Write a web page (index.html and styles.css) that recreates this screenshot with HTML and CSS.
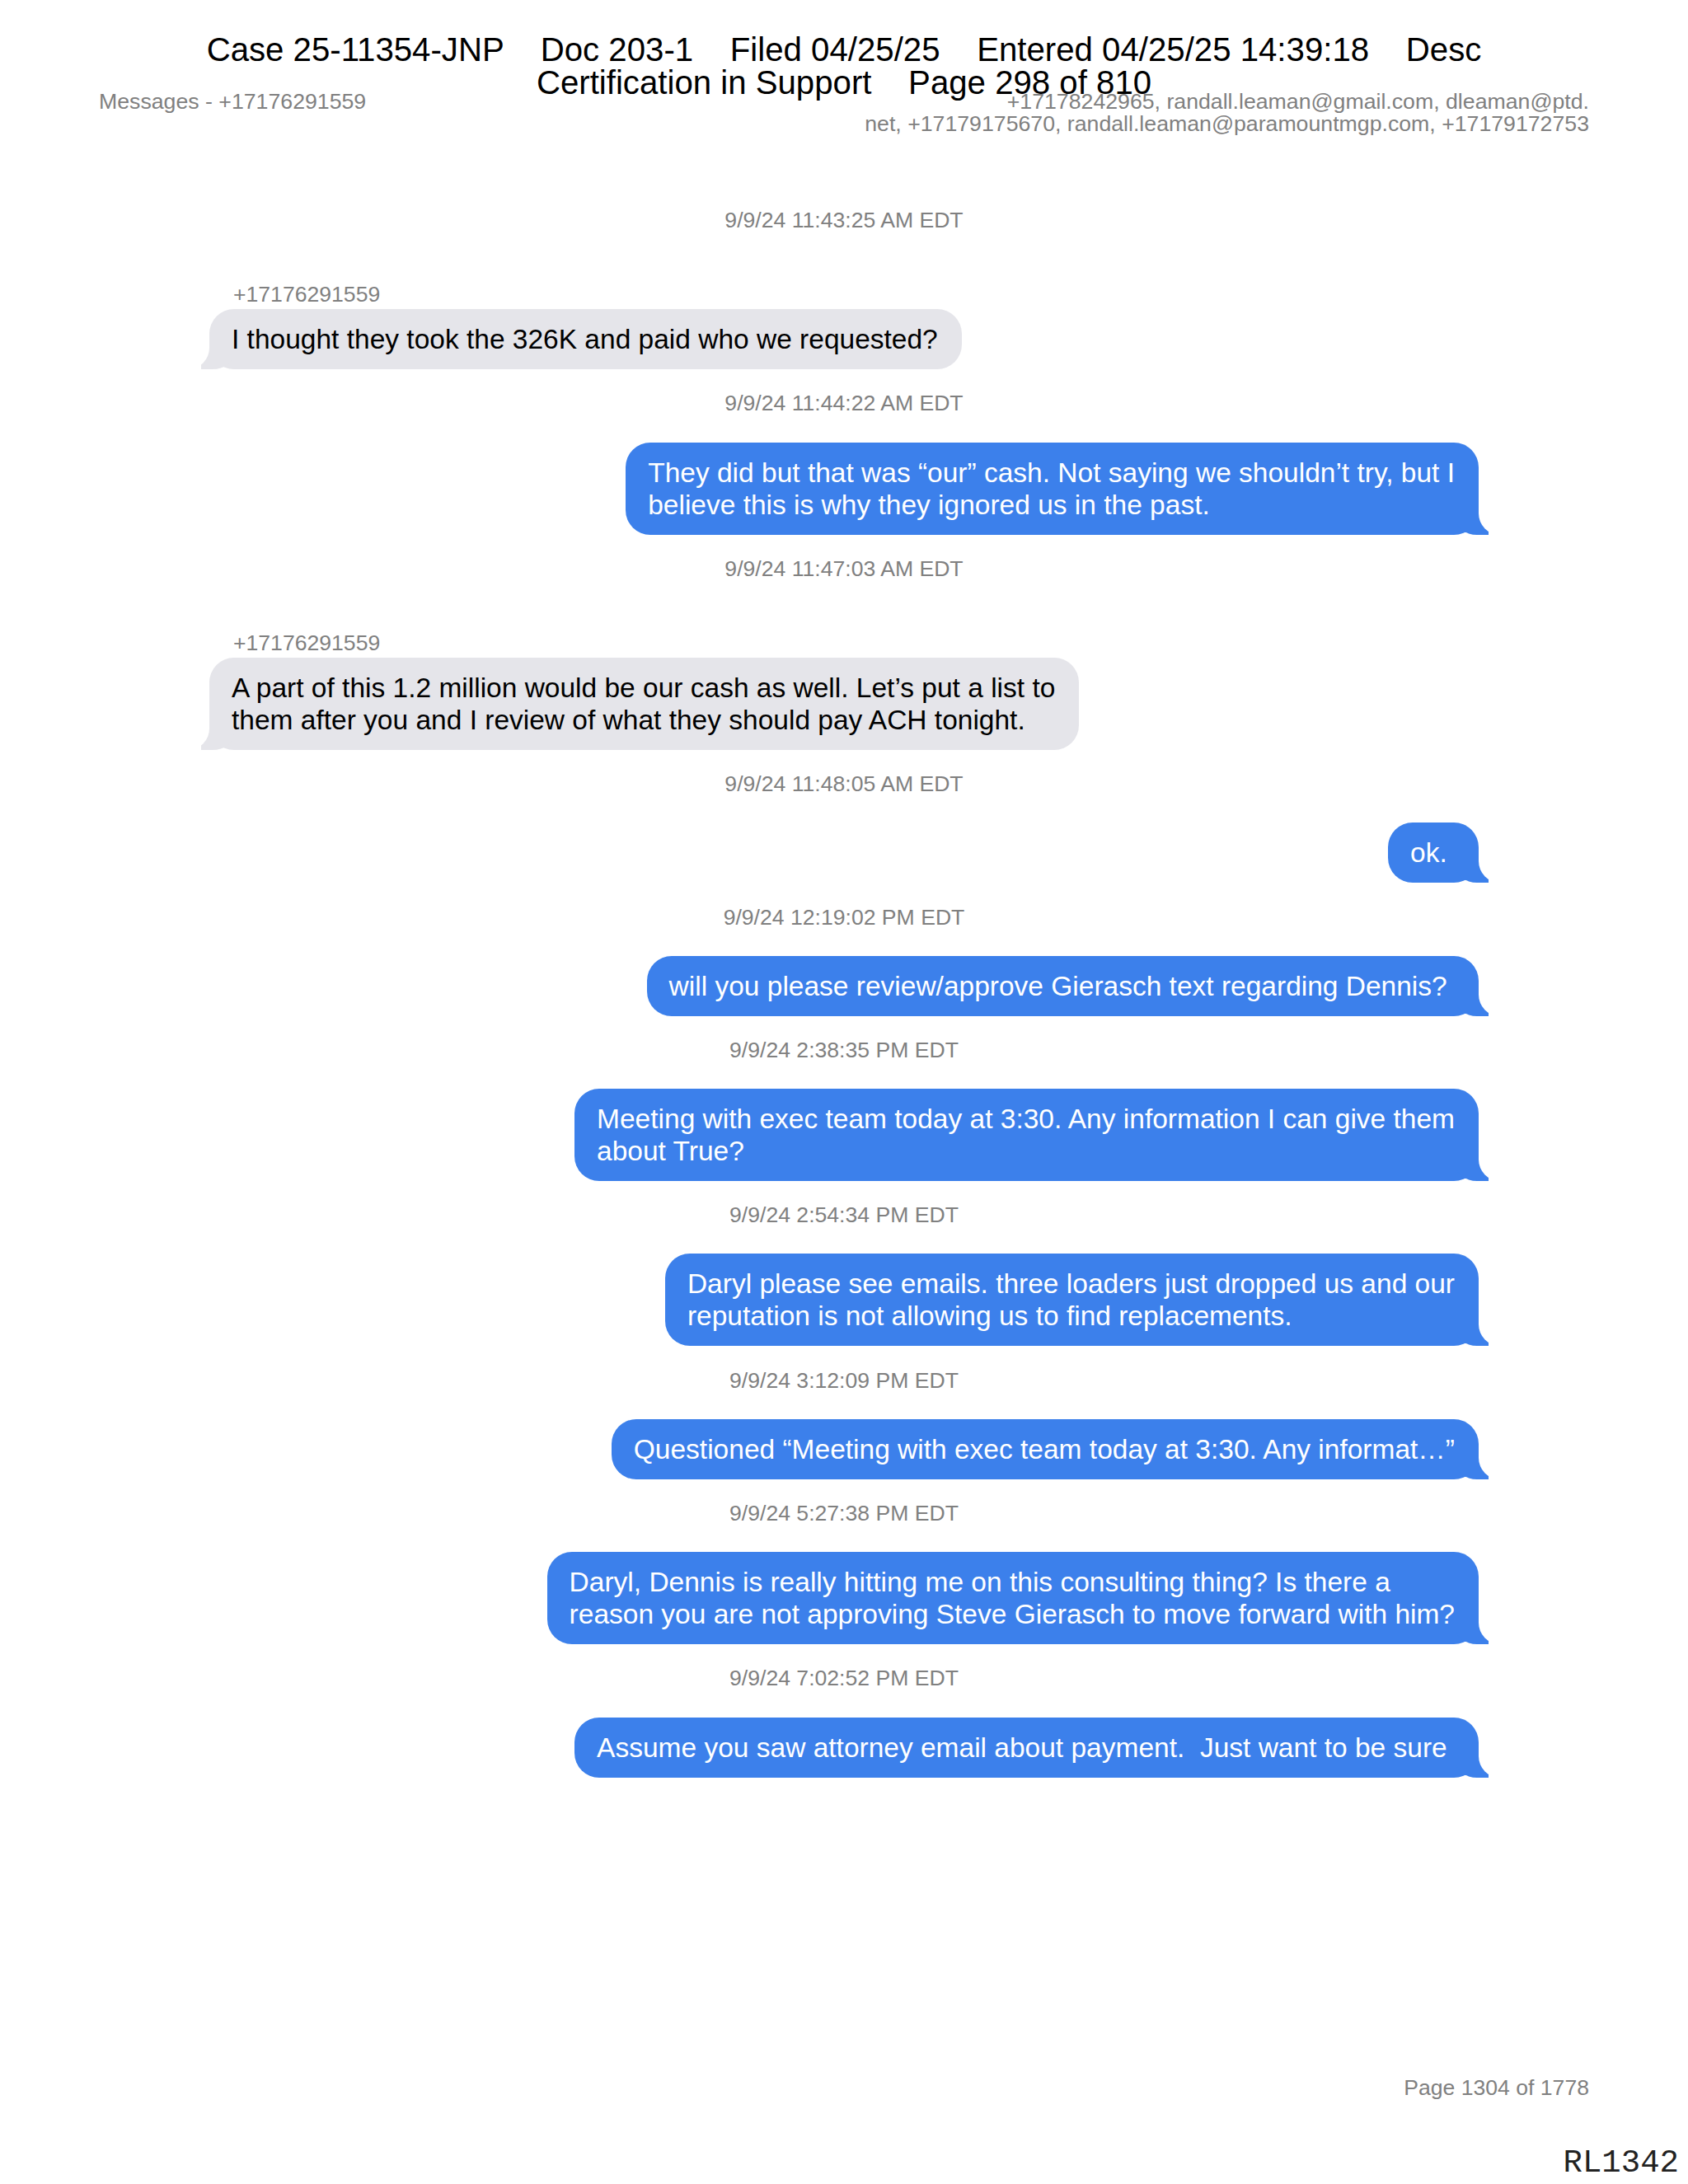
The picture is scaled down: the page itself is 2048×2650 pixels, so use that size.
FILE: index.html
```html
<!DOCTYPE html>
<html lang="en">
<head>
<meta charset="utf-8">
<title>Messages - +17176291559</title>
<link rel="stylesheet" href="styles.css">
</head>
<body>
<div class="page">
  <div class="stamp">
    <div class="stamp-line">Case 25-11354-JNP    Doc 203-1    Filed 04/25/25    Entered 04/25/25 14:39:18    Desc</div>
    <div class="stamp-line">Certification in Support    Page 298 of 810</div>
  </div>

  <header class="meta">
    <div class="meta-title">Messages - +17176291559</div>
    <div class="meta-parts">+17178242965, randall.leaman@gmail.com, dleaman@ptd.<br>net, +17179175670, randall.leaman@paramountmgp.com, +17179172753</div>
  </header>

  <main class="chat">
    <div class="ts">9/9/24 11:43:25 AM EDT</div>
    <div class="sender">+17176291559</div>
    <div class="bubble in">I thought they took the 326K and paid who we requested?</div>

    <div class="ts">9/9/24 11:44:22 AM EDT</div>
    <div class="bubble out">They did but that was “our” cash. Not saying we shouldn’t try, but I<br>believe this is why they ignored us in the past.</div>

    <div class="ts">9/9/24 11:47:03 AM EDT</div>
    <div class="sender">+17176291559</div>
    <div class="bubble in">A part of this 1.2 million would be our cash as well. Let’s put a list to<br>them after you and I review of what they should pay ACH tonight.</div>

    <div class="ts">9/9/24 11:48:05 AM EDT</div>
    <div class="bubble out">ok. </div>

    <div class="ts">9/9/24 12:19:02 PM EDT</div>
    <div class="bubble out">will you please review/approve Gierasch text regarding Dennis? </div>

    <div class="ts">9/9/24 2:38:35 PM EDT</div>
    <div class="bubble out">Meeting with exec team today at 3:30. Any information I can give them<br>about True?</div>

    <div class="ts">9/9/24 2:54:34 PM EDT</div>
    <div class="bubble out">Daryl please see emails. three loaders just dropped us and our<br>reputation is not allowing us to find replacements.</div>

    <div class="ts">9/9/24 3:12:09 PM EDT</div>
    <div class="bubble out">Questioned “Meeting with exec team today at 3:30. Any informat…”</div>

    <div class="ts">9/9/24 5:27:38 PM EDT</div>
    <div class="bubble out">Daryl, Dennis is really hitting me on this consulting thing? Is there a<br>reason you are not approving Steve Gierasch to move forward with him?</div>

    <div class="ts">9/9/24 7:02:52 PM EDT</div>
    <div class="bubble out">Assume you saw attorney email about payment.  Just want to be sure </div>
  </main>

  <footer class="pageno">Page 1304 of 1778</footer>
  <div class="bates">RL1342</div>
</div>
</body>
</html>
```

FILE: styles.css
```css
html, body {
  margin: 0;
  padding: 0;
  background: #ffffff;
}

.page {
  position: relative;
  width: 2048px;
  height: 2650px;
  box-sizing: border-box;
  padding: 110px 120px 0;
  display: flex;
  flex-direction: column;
  font-family: "Liberation Sans", Arial, sans-serif;
  color: #000;
}

/* court filing stamp overlaid on the page */
.stamp {
  position: absolute;
  top: 41px;
  left: 0;
  right: 0;
  z-index: 2;
  text-align: center;
  font-size: 40.2px;
  line-height: 40px;
  color: #000;
}

.stamp-line {
  white-space: pre;
}

.meta {
  display: flex;
  justify-content: space-between;
  align-items: flex-start;
  font-size: 26.7px;
  line-height: 27px;
  color: #808080;
}

.meta-parts {
  text-align: right;
}

.chat {
  width: 1540px;
  align-self: center;
  margin-top: 88px;
  display: flex;
  flex-direction: column;
}

.ts {
  font-size: 26.6px;
  line-height: 30px;
  color: #808080;
  text-align: center;
  margin-bottom: 32.2px;
}

.sender {
  align-self: flex-start;
  font-size: 26.6px;
  line-height: 30px;
  color: #808080;
  padding-left: 29px;
  margin-top: 28px;
  margin-bottom: 3px;
}

.bubble {
  position: relative;
  z-index: 0;
  font-size: 33.5px;
  line-height: 39px;
  padding: 17px 29px 17px 27px;
  border-radius: 30px;
  white-space: pre;
  margin-bottom: 26.2px;
}

.bubble::before,
.bubble::after {
  content: "";
  position: absolute;
  z-index: -1;
  bottom: 0;
  height: 36px;
}

.in {
  align-self: flex-start;
  background: #e5e5ea;
  color: #000;
}

.in::before {
  left: -10px;
  width: 40px;
  background: #e5e5ea;
  border-bottom-right-radius: 26px 20px;
}

.in::after {
  left: -40px;
  width: 40px;
  background: #ffffff;
  border-bottom-right-radius: 26px;
}

.out {
  align-self: flex-end;
  background: #3c80eb;
  color: #ffffff;
}

.out::before {
  right: -12px;
  width: 40px;
  background: #3c80eb;
  border-bottom-left-radius: 26px 20px;
}

.out::after {
  right: -40px;
  width: 40px;
  background: #ffffff;
  border-bottom-left-radius: 26px;
}

.pageno {
  margin-top: auto;
  margin-bottom: 102px;
  text-align: right;
  font-size: 26.6px;
  line-height: 30px;
  color: #808080;
}

.bates {
  position: absolute;
  right: 11px;
  bottom: 5px;
  font-family: "Liberation Mono", "Courier New", monospace;
  font-size: 39px;
  line-height: 40px;
  color: #222;
}
```
